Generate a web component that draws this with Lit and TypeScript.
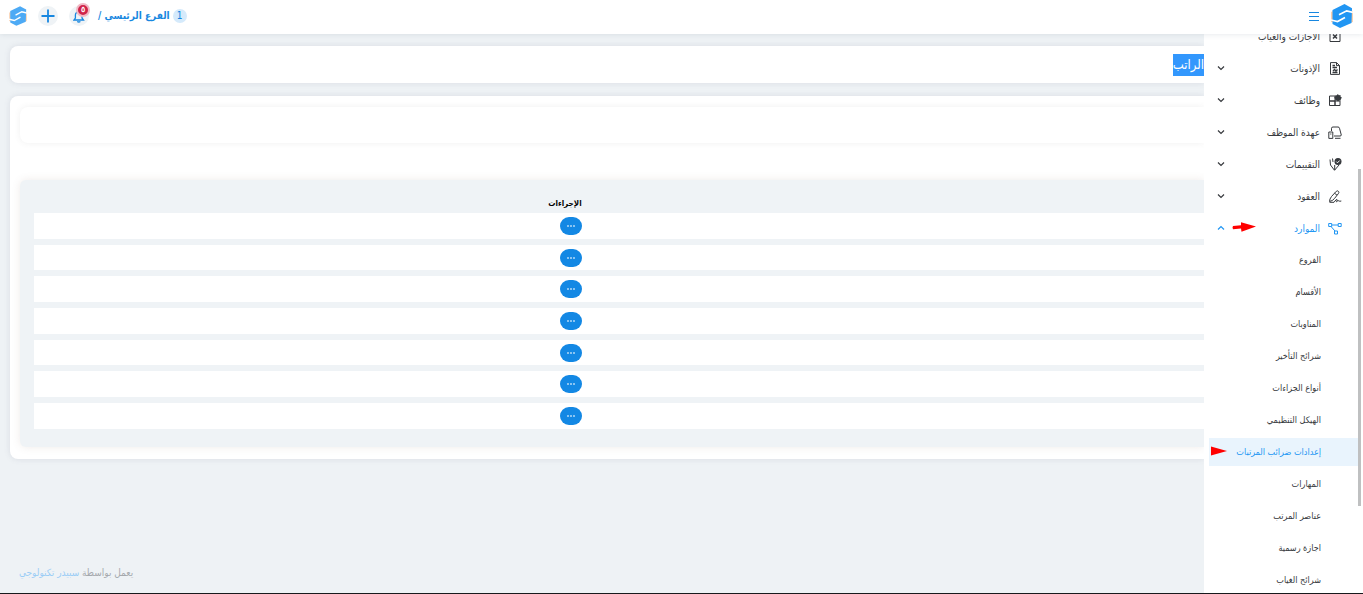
import { LitElement, html, svg, css, nothing } from "lit";
import { customElement, state } from "lit/decorators.js";
import { classMap } from "lit/directives/class-map.js";

const icons = {
  absence: svg`<path d="M2 1h10v10.5H2z"/><path d="M5 4.500l4 4m0-4l-4 4" stroke-width="1.500"/>`,
  permit: svg`<path d="M2.500.6h6L11.500 3.500v8.900h-9zM8.500.6v3h3"/><path d="M4.500 3.500H7M4.500 5.500H9M4.500 10.500h5M5 9l1.500-1.500L8 9l1.500-1.500" stroke-width="1.300"/>`,
  jobs: svg`<path d="M1.500 2H7v5H1.500zM1.500 7H7v4.500H1.500zM7 7h5v4.500H7z"/><path d="M9.800 0l1.100 1.200 1.600-.1.100 1.600L14 3.800l-1.200 1.100.1 1.600-1.700.1-1.200 1-1.100-1-1.700-.2V4.900l-1-1.100 1-1.200V1.200l1.600.1z" fill="currentColor" stroke="none"/>`,
  custody: svg`<path d="M3.500 5V2.300Q3.500 1 5 1h5q1.300 0 1.500 1.300L13.300 9q0 1-1.300 1H6M7 12.300h5.500"/><path d="M.8 6h4v6.400h-4zM2.200 8h1.200"/>`,
  rating: svg`<path d="M2 1.500L2.500 7 6.500 12.300 11 7M4.500.5L5 4M6.700 7v5"/><circle cx="10" cy="3.600" r="3.500" fill="currentColor" stroke="none"/><path d="M8.300 3.600l1.200 1.200 2.200-2.300" stroke="#fff"/>`,
  contract: svg`<path d="M1.500 11.500q0-2.500 2-5L8.300 1.300q1.500-1 2.300.2.700 1-.3 2.200L6.500 8.500Q4.500 11 1.500 11.500zM6.500 3.200l2.500 2M1.500 12.300H6Q8.300 9 9 9.500T8.500 11.800Q10 10 10.800 10.800T13.300 11"/>`,
  resources: svg`<path d="M.7 1.500h3v3h-3zM10.200 1.500h3v3h-3zM6.500 9h3v3h-3zM3.700 3h6.500M3 4.500L7 9"/>`,
};

type IconName = keyof typeof icons;

const sections: { label: string; icon: IconName; open?: boolean; plain?: boolean }[] = [
  { label: "الاجازات والغياب", icon: "absence", plain: true },
  { label: "الإذونات", icon: "permit" },
  { label: "وظائف", icon: "jobs" },
  { label: "عهدة الموظف", icon: "custody" },
  { label: "التقييمات", icon: "rating" },
  { label: "العقود", icon: "contract" },
  { label: "الموارد", icon: "resources", open: true },
];

const resources = [
  "الفروع",
  "الأقسام",
  "المناوبات",
  "شرائح التأخير",
  "أنواع الجزاءات",
  "الهيكل التنظيمي",
  "إعدادات ضرائب المرتبات",
  "المهارات",
  "عناصر المرتب",
  "اجازة رسمية",
  "شرائح الغياب",
];

const logo = html`<svg class="logo" viewBox="0 0 22 24" aria-hidden="true">
  <path d="M0 8l4-2v13l-4-1zM18 6l4 1v11l-4 1z" fill="#fbcfac" />
  <path d="M13.500 0L21 4.200 20.500 19 9 24 1.500 20 1.500 6z" fill="#2196f3" />
  <path d="M22 8.300L15.700 6.800 8 10.800M0 16l6.500 1.500L14 13.500" fill="none" stroke="#fff" stroke-width="1.700" />
</svg>`;

@customElement("app-topbar")
class AppTopbar extends LitElement {
  static styles = css`
    :host {
      display: flex;
      align-items: center;
      justify-content: space-between;
      height: 34px;
      padding: 0 10px 3px 9px;
      box-sizing: border-box;
      background: #fff;
      box-shadow: 0 0 6px rgba(90, 110, 130, 0.18);
      position: relative;
      color: #1787e0;
    }
    .group { display: flex; align-items: center; gap: 11px; }
    .brand { gap: 12px; }
    .logo { display: block; width: 22px; height: 24px; }
    .round {
      position: relative;
      display: grid;
      place-items: center;
      width: 20px;
      height: 20px;
      padding: 0;
      border: 0;
      border-radius: 50%;
      background: #eff3f6;
      color: inherit;
    }
    .plain { width: 10px; background: none; border-radius: 0; }
    .avatar { width: 18px; background: none; opacity: 0.8; }
    .avatar .logo { width: 18px; height: 20px; }
    .alert {
      position: absolute;
      top: -3px;
      right: -1px;
      width: 10px;
      height: 10px;
      border: 2px solid #f0b9c5;
      border-radius: 50%;
      background: #d02349;
      color: #fff;
      font-size: 8px;
      line-height: 10px;
      font-weight: bold;
    }
    .branch {
      display: flex;
      align-items: center;
      gap: 3px;
      color: #1787e0;
      font-size: 10px;
      font-weight: bold;
      text-decoration: none;
      margin-left: -2px;
    }
    .count {
      width: 14px;
      line-height: 14px;
      border-radius: 7px;
      background: #d5eafb;
      font-weight: normal;
      text-align: center;
    }
    .stroke { fill: none; stroke: currentColor; }
  `;

  render() {
    return html`
      <div class="group brand">
        ${logo}
        <button class="round plain" aria-label="القائمة">
          <svg class="stroke" width="10" height="10" viewBox="0 0 10 10"><path d="M0 1.500h10M0 5.500h10M0 9.500h10" /></svg>
        </button>
      </div>
      <div class="group">
        <a class="branch" href="#"><span class="count">1</span><span>الفرع الرئيسي /</span></a>
        <button class="round" aria-label="الإشعارات">
          <svg class="stroke" width="12" height="14" viewBox="0 0 12 14"><path d="M1 11h9.500L9 9V6a3.300 3.300 0 0 0-6.600 0v3zM4.200 12.500q1.600 1 3.200 0" stroke-width="1.300" /></svg>
          <span class="alert">٥</span>
        </button>
        <button class="round" aria-label="إضافة">
          <svg class="stroke" width="14" height="14" viewBox="0 0 14 14"><path d="M7 .5v13M.5 7h13" stroke-width="1.800" /></svg>
        </button>
        <button class="round avatar" aria-label="الحساب">${logo}</button>
      </div>
    `;
  }
}

@customElement("app-sidebar")
class AppSidebar extends LitElement {
  @state() private active = "إعدادات ضرائب المرتبات";

  static styles = css`
    :host {
      display: block;
      position: relative;
      overflow: hidden;
      background: #fff;
      color: #36393d;
      font-size: 9px;
    }
    .menu {
      display: grid;
      gap: 4px;
      margin: -12px 5px 0;
      padding: 0;
      list-style: none;
    }
    .row {
      display: flex;
      align-items: center;
      gap: 8px;
      width: 100%;
      height: 28px;
      box-sizing: border-box;
      padding: 0 16px 0 8px;
      border: 0;
      background: none;
      color: inherit;
      font: inherit;
      font-size: 10px;
      text-decoration: none;
      white-space: nowrap;
    }
    .sub { padding-right: 37px; font-size: 9px; }
    .open { color: #2196f3; }
    .active { background: #e9f4fd; color: #2196f3; }
    .label { flex: 1; text-align: right; }
    .icon { width: 14px; height: 13px; }
    .icon, .chevron { flex: none; fill: none; stroke: currentColor; }
    .thumb {
      position: absolute;
      top: 135px;
      right: 2px;
      width: 3px;
      height: 337px;
      background: #bfc0c1;
    }
    .item { position: relative; }
    .pointer { position: absolute; top: 8px; left: 23px; }
    .pointer-near { left: 2px; }
  `;

  render() {
    return html`
      <ul class="menu">
        ${sections.map((s) => html`<li class="item">
          <button class=${classMap({ row: true, open: !!s.open })} aria-expanded=${s.open ? "true" : "false"}>
            <svg class="icon" viewBox="0 0 14 13">${icons[s.icon]}</svg>
            <span class="label">${s.label}</span>
            ${s.plain ? nothing : html`<svg class="chevron" width="8" height="6" viewBox="0 0 8 6">
              <path d=${s.open ? "M1 4.500l3-3 3 3" : "M1 1.500l3 3 3-3"} stroke-width="1.200" />
            </svg>`}
          </button>
          ${s.open ? html`<svg class="pointer" width="24" height="10" viewBox="0 0 24 10">
            <path d="M1 4l8-.8V.3L24 4.500 9.500 9.700 9 6.500 1 7.200Q0 5.500 1 4z" fill="#f00" />
          </svg>` : nothing}
        </li>`)}
        ${resources.map((label) => html`<li class="item">
          <a class=${classMap({ row: true, sub: true, active: label === this.active })} href="#"
            @click=${(e: Event) => { e.preventDefault(); this.active = label; }}><span class="label">${label}</span></a>
          ${label === this.active ? html`<svg class="pointer pointer-near" width="16" height="10" viewBox="0 0 16 10">
            <path d="M0 .5l16 4.500L0 9.500z" fill="#f00" />
          </svg>` : nothing}
        </li>`)}
      </ul>
      <span class="thumb"></span>
    `;
  }
}

@customElement("app-root")
class AppRoot extends LitElement {
  static styles = css`
    :host {
      display: grid;
      grid-template: auto minmax(0, 1fr) / 159px minmax(0, 1fr);
      height: 100vh;
      box-sizing: border-box;
      border-bottom: 1px solid #17191c;
      background: #eef2f5;
      direction: rtl;
      font-family: "DejaVu Sans Condensed", "DejaVu Sans", sans-serif;
    }
    app-topbar { grid-column: 1 / -1; z-index: 1; }
    .main {
      display: flex;
      flex-direction: column;
      overflow: hidden;
      padding: 12px 0 13px 10px;
    }
    .card {
      border-radius: 0 0 0 8px;
      border-radius: 8px 0 0 8px;
      background: #fff;
      box-shadow: 0 0 6px rgba(90, 90, 120, 0.14);
    }
    .title { margin: 0 0 13px; font-size: 13px; line-height: 37px; font-weight: normal; }
    .selected { display: inline-block; line-height: 22px; background: #3297fd; color: #fff; }
    .body { padding: 11px 0 12px 10px; }
    .filters {
      height: 36px;
      margin-bottom: 37px;
      border-radius: 8px 0 0 8px;
      box-shadow: 0 0 6px rgba(90, 90, 90, 0.09);
    }
    .panel {
      padding: 13px 0 12px 14px;
      border-radius: 6px 0 0 6px;
      background: #eff3f6;
      box-shadow: 0 0 8px rgba(120, 90, 70, 0.12);
    }
    .grid { width: 100%; border-collapse: separate; border-spacing: 0 6px; table-layout: fixed; }
    .grid th {
      height: 14px;
      box-sizing: border-box;
      padding: 2px 14px 0;
      font-size: 8px;
      line-height: 12px;
      text-align: right;
      color: #000;
    }
    .grid .lead { width: 52%; }
    .grid thead th { height: 8px; padding-top: 1px; line-height: 7px; }
    .grid td { height: 26px; box-sizing: border-box; padding: 0 14px; background: #fff; line-height: 0; }
    .grid tr:nth-child(3n + 2) td { height: 25px; }
    .more {
      display: grid;
      place-items: center;
      width: 22px;
      height: 18px;
      padding: 0;
      border: 0;
      border-radius: 9px;
      background: #1388e4;
      color: #fff;
    }
    .footer {
      margin: auto 0 0;
      padding-left: 9px;
      color: #a5a9ad;
      font-size: 10px;
      line-height: 14px;
      text-align: left;
    }
    .footer a { color: #9bcdf5; text-decoration: none; }
  `;

  render() {
    return html`
      <app-topbar></app-topbar>
      <app-sidebar></app-sidebar>
      <main class="main">
        <h1 class="card title"><span class="selected">الراتب</span></h1>
        <section class="card body">
          <div class="filters"></div>
          <div class="panel">
            <table class="grid">
              <thead><tr><th class="lead"></th><th>الإجراءات</th></tr></thead>
              <tbody>
                ${Array.from({ length: 7 }, () => html`<tr>
                  <td></td>
                  <td><button class="more" aria-label="المزيد">
                    <svg width="8" height="2" viewBox="0 0 8 2"><path d="M0 1h2M3 1h2M6 1h2" stroke="#fff" /></svg>
                  </button></td>
                </tr>`)}
              </tbody>
            </table>
          </div>
        </section>
        <p class="footer">يعمل بواسطة <a href="#">سبيدر تكنولوجي</a></p>
      </main>
    `;
  }
}
